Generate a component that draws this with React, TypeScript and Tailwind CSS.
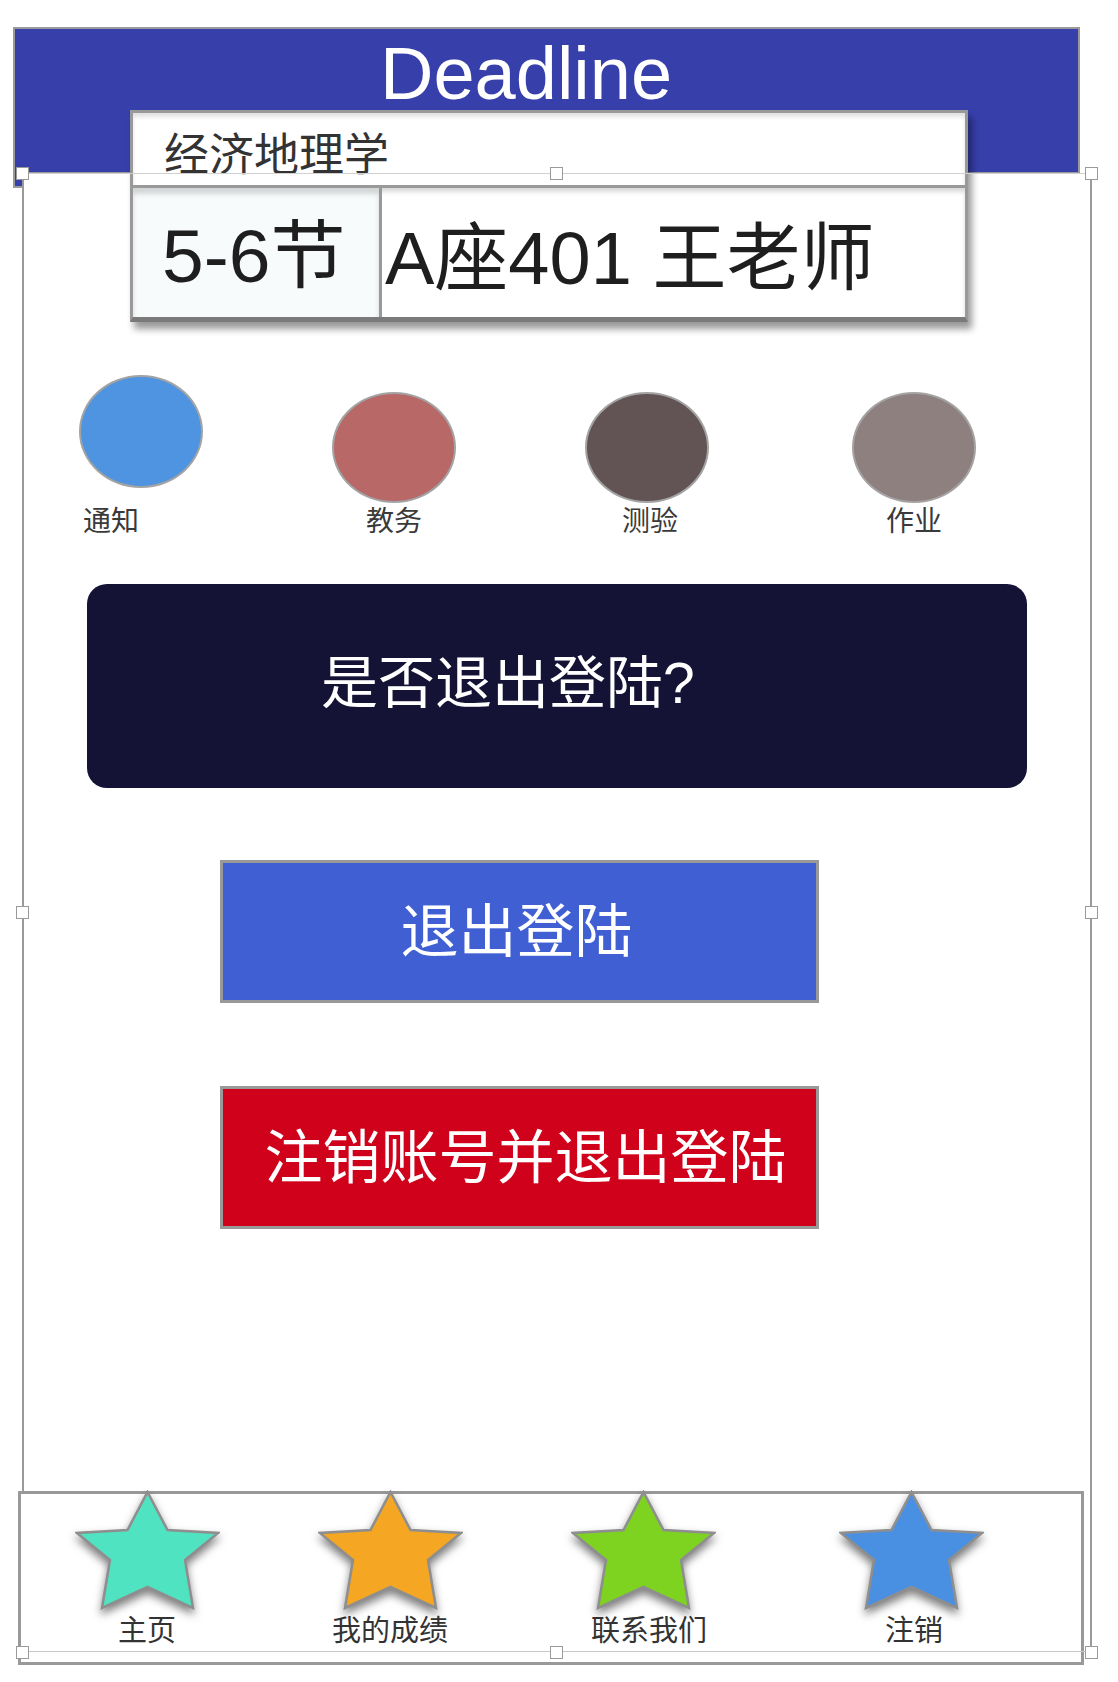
import * as React from "react";

type Dot = { label: string; color: string; box: string; ring: string; text: string };

const dots: Dot[] = [
    { label: "通知", color: "bg-[#4f94e0]", box: "ml-[79px]", ring: "mt-0 h-[113px]", text: "self-start ml-[4px]" },
    { label: "教务", color: "bg-[#b96868]", box: "ml-[129px]", ring: "mt-[17px] h-[111px]", text: "self-center" },
    { label: "测验", color: "bg-[#625454]", box: "ml-[129px]", ring: "mt-[17px] h-[111px]", text: "self-center ml-[6px]" },
    { label: "作业", color: "bg-[#8e807f]", box: "ml-[143px]", ring: "mt-[17px] h-[111px]", text: "self-center" },
];

type Tab = { label: string; fill: string; box: string; text: string };

const tabs: Tab[] = [
    { label: "主页", fill: "#50e3c2", box: "ml-[46px]", text: "" },
    { label: "我的成绩", fill: "#f5a623", box: "ml-[83px]", text: "" },
    { label: "联系我们", fill: "#7ed321", box: "ml-[93px]", text: "ml-[12px]" },
    { label: "注销", fill: "#4a90e2", box: "ml-[108px]", text: "ml-[6px]" },
];

const Star: React.FC<{ fill: string }> = ({ fill }) => (
    <svg width="145" height="120" viewBox="0 0 145 120" className="drop-shadow-[0_5px_4px_rgba(0,0,0,0.5)]">
        <polygon
            points="72.5,2 92.5,40 143,43 110,70 118,118 72.5,97 27,118 35,70 2,43 52.5,40"
            fill={fill}
            stroke="#8e8e8e"
            strokeWidth="2.5"
            strokeLinejoin="miter"
        />
    </svg>
);

const handles = [
    "left-[16px] top-[167px]",
    "left-[550px] top-[167px]",
    "left-[1085px] top-[167px]",
    "left-[16px] top-[906px]",
    "left-[1085px] top-[906px]",
    "left-[16px] top-[1646px]",
    "left-[550px] top-[1646px]",
    "left-[1085px] top-[1646px]",
];

const App: React.FC = () => {
    return (
        <div className="relative w-[1118px] h-[1682px] bg-white pt-[27px] overflow-hidden font-['Liberation_Sans','Noto_Sans_CJK_SC',sans-serif]">
            {/* header */}
            <div className="ml-[13px] w-[1067px] h-[147px] bg-[#373fab] border-2 border-[#9a9a9a] pt-[8px] pl-[365px]">
                <span className="block text-[74px] leading-[74px] text-white">Deadline</span>
            </div>

            {/* course card */}
            <div className="relative z-10 mt-[-64px] ml-[130px] w-[838px] shadow-[4px_7px_7px_rgba(0,0,0,0.4)]">
                <div className="h-[75px] bg-white border-t-[3px] border-x-[3px] border-[#999] shadow-[inset_0_4px_4px_rgba(0,0,0,0.12)] flex items-center pt-[13px] pl-[31px]">
                    <span className="text-[45px] leading-none text-[#333]">经济地理学</span>
                </div>
                <div className="h-[137px] flex bg-white border-[3px] border-b-[5px] border-[#999] border-b-[#7a7a7a] shadow-[inset_0_4px_4px_rgba(0,0,0,0.15)]">
                    <div className="w-[249px] bg-[#f7fbfc] border-r-[3px] border-[#999] flex items-center pl-[29px] pt-[8px] shadow-[inset_0_6px_5px_rgba(0,0,0,0.15)]">
                        <span className="text-[75px] leading-none text-[#1e1e1e]">5-6节</span>
                    </div>
                    <div className="flex-1 flex items-center pl-[3px] pt-[12px]">
                        <span className="text-[74px] leading-none text-[#1e1e1e] whitespace-pre">A座401 王老师</span>
                    </div>
                </div>
            </div>

            {/* category dots */}
            <div className="mt-[53px] flex">
                {dots.map((d, i) => (
                    <div key={i} className={`${d.box} w-[124px] flex flex-col`}>
                        <div className="h-[130px]">
                            <div className={`${d.ring} ${d.color} w-[124px] rounded-[50%] border-2 border-[#a3a3a3]`}></div>
                        </div>
                        <span className={`${d.text} mt-[3px] text-[28px] leading-[28px] text-[#3a3a3a]`}>{d.label}</span>
                    </div>
                ))}
            </div>

            {/* prompt */}
            <div className="mt-[48px] ml-[87px] w-[940px] h-[204px] rounded-[20px] bg-[#141235] flex items-center pl-[234px] pb-[6px]">
                <span className="text-[57px] leading-none text-white">是否退出登陆?</span>
            </div>

            <div className="mt-[72px] ml-[220px] w-[599px] h-[143px] border-[3px] border-[#999] bg-[#3f5fd3] flex items-center justify-center pr-[6px]">
                <span className="text-[58px] leading-none text-white">退出登陆</span>
            </div>

            <div className="mt-[83px] ml-[220px] w-[599px] h-[143px] border-[3px] border-[#999] bg-[#d0021b] flex items-center justify-center pl-[12px]">
                <span className="text-[58px] leading-none text-white">注销账号并退出登陆</span>
            </div>

            {/* tab bar */}
            <div className="relative z-10 mt-[262px] ml-[18px] w-[1066px] h-[174px] border-[3px] border-[#999] bg-white flex">
                {tabs.map((t, i) => (
                    <div key={i} className={`${t.box} w-[160px] flex flex-col items-center`}>
                        <div className="mt-[-4px]">
                            <Star fill={t.fill} />
                        </div>
                        <span className={`${t.text} mt-[7px] text-[29px] leading-[29px] text-[#333]`}>{t.label}</span>
                    </div>
                ))}
            </div>

            {/* selection frame overlay */}
            <div className="absolute left-[13px] top-[172px] w-[10px] h-[16px] bg-[#373fab] border-l-2 border-b-2 border-[#9a9a9a]"></div>
            <div className="absolute left-[22px] top-[173px] w-[2px] h-[1318px] bg-[#9a9a9a]"></div>
            <div className="absolute left-[1090px] top-[173px] w-[2px] h-[1479px] bg-[#9a9a9a]"></div>
            <div className="absolute z-20 left-[23px] top-[173px] w-[1068px] h-px bg-[#d0d0d0]"></div>
            <div className="absolute z-20 left-[23px] top-[1651px] w-[1068px] h-px bg-[#c8c8c8]"></div>
            {handles.map((h, i) => (
                <div key={i} className={`absolute z-30 ${h} w-[13px] h-[13px] bg-white border border-[#9a9a9a]`}></div>
            ))}
        </div>
    );
};

export default App;
